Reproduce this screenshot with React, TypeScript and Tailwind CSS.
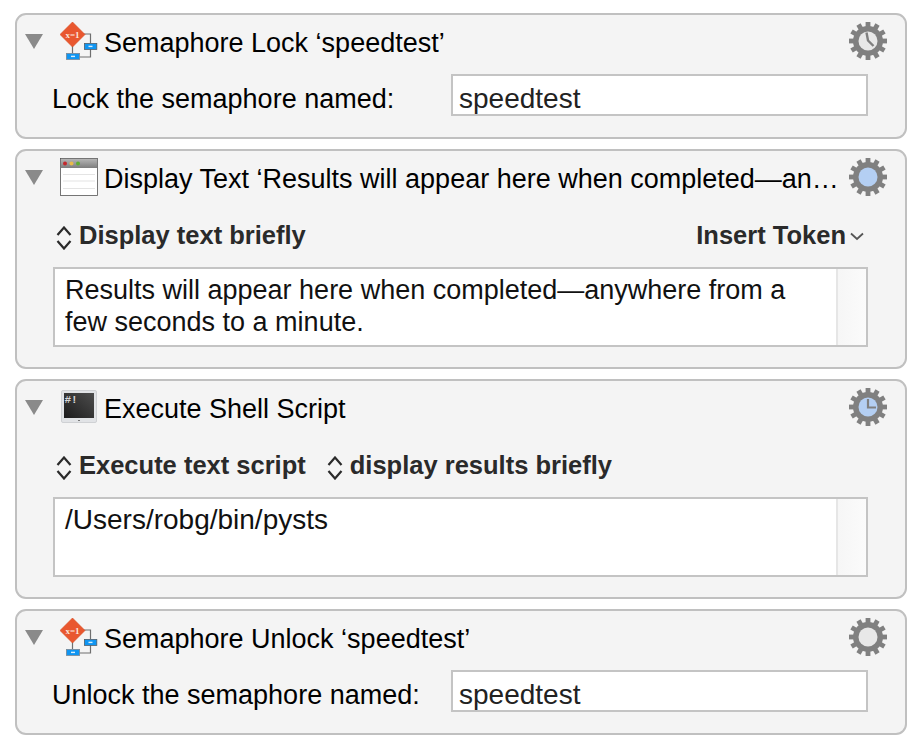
const font = "font-['Liberation_Sans',Arial,sans-serif]";

function Gear({ children }: { children?: React.ReactNode }) {
  const teeth = Array.from({ length: 12 }, (_, i) => i * 30);
  return (
    <svg width="38" height="38" viewBox="0 0 38 38">
      {teeth.map((a) => (
        <rect key={a} x="16.6" y="0" width="4.8" height="8" fill="#808080" transform={`rotate(${a} 19 19)`} />
      ))}
      <circle cx="19" cy="19" r="15" fill="#808080" />
      {children}
    </svg>
  );
}

function PlainGear() {
  return (
    <Gear>
      <circle cx="19" cy="19" r="9.5" fill="#e8e8e8" />
    </Gear>
  );
}

function ClockGear({ fill, variant }: { fill: string; variant: "slant" | "corner" }) {
  return (
    <Gear>
      <circle cx="19" cy="19" r="9.5" fill={fill} />
      {variant === "slant" ? (
        <path d="M17.5 10.5 L19 18.5 L24.5 24" stroke="#808080" strokeWidth="2.4" fill="none" />
      ) : (
        <path d="M19 11 L19 19.5 L27 19.5" stroke="#808080" strokeWidth="2.2" fill="none" />
      )}
    </Gear>
  );
}

function BlueGear() {
  return (
    <Gear>
      <circle cx="19" cy="19" r="9.5" fill="#b4cff3" />
    </Gear>
  );
}

function Triangle() {
  return (
    <svg width="18" height="15" viewBox="0 0 18 15" className="shrink-0 mt-[1px]">
      <path d="M0 0 H18 L9 15 Z" fill="#8a8a8a" />
    </svg>
  );
}

function SemaphoreIcon() {
  return (
    <svg width="38" height="38" viewBox="0 0 38 38">
      <path d="M20 12 H30.5 V21 M30.5 27 V35 H20 M12.5 24 V31" stroke="#6f6f6f" strokeWidth="1.2" fill="none" />
      <path d="M12.5 0 L25 12.5 L12.5 25 L0 12.5 Z" fill="#e9572f" stroke="#d8491f" strokeWidth="0.6" />
      <text x="12.5" y="15.5" textAnchor="middle" fontSize="9" fontWeight="700" fill="#fbe6dc" fontFamily="Liberation Serif, serif">x=1</text>
      <rect x="24.4" y="21.4" width="12.4" height="6" fill="#0f95f2" stroke="#53606b" strokeWidth="0.8" />
      <rect x="28.5" y="23.7" width="4" height="1.4" fill="#d8eefc" />
      <rect x="6.4" y="31.4" width="13.2" height="6" fill="#0f95f2" stroke="#7a8894" strokeWidth="0.8" />
      <rect x="11" y="33.7" width="4" height="1.4" fill="#d8eefc" />
    </svg>
  );
}

function WindowIcon() {
  return (
    <svg width="38" height="38" viewBox="0 0 38 38">
      <defs>
        <linearGradient id="bar" x1="0" y1="0" x2="0" y2="1">
          <stop offset="0" stopColor="#b5b5b5" />
          <stop offset="1" stopColor="#7d7d7d" />
        </linearGradient>
      </defs>
      <rect x="0.5" y="0.5" width="37" height="37" fill="#fff" stroke="#555" strokeWidth="0.8" />
      <rect x="1" y="1" width="36" height="9" fill="url(#bar)" />
      <circle cx="5" cy="5.5" r="2" fill="#c4282d" />
      <circle cx="11.5" cy="5.5" r="2" fill="#e8bb4a" />
      <circle cx="18" cy="5.5" r="2" fill="#5fae2f" />
      <path d="M3 16.5 H35 M3 23 H35 M3 30.5 H35" stroke="#e4e4e4" strokeWidth="1.2" />
    </svg>
  );
}

function TerminalIcon() {
  return (
    <svg width="38" height="34" viewBox="0 0 38 34">
      <defs>
        <linearGradient id="screen" x1="0" y1="1" x2="1" y2="0">
          <stop offset="0" stopColor="#1c1c1c" />
          <stop offset="1" stopColor="#4d4d4d" />
        </linearGradient>
      </defs>
      <rect x="1.5" y="0.5" width="35" height="32" rx="1.5" fill="#e1e3e6" stroke="#cfd1d4" />
      <rect x="4" y="3" width="30" height="25" fill="url(#screen)" />
      <text x="4.5" y="13" fontSize="11" fontWeight="700" fill="#d5d5d5" fontFamily="Liberation Mono, monospace">#!</text>
      <rect x="18" y="30" width="2" height="1" fill="#777" />
    </svg>
  );
}

function UpDown() {
  return (
    <svg width="16" height="24" viewBox="0 0 16 24" className="shrink-0 mt-[5px]">
      <path d="M1.5 9 L8 1.5 L14.5 9 M1.5 15 L8 22.5 L14.5 15" stroke="#2a2a2a" strokeWidth="2.2" fill="none" />
    </svg>
  );
}

function Header({ icon, title, gear }: { icon: React.ReactNode; title: string; gear: React.ReactNode }) {
  return (
    <div className="flex items-center h-[38px]">
      <div className="w-[35px] flex justify-start">
        <Triangle />
      </div>
      <div className="w-[44px] flex justify-start">{icon}</div>
      <div className="flex-1 text-[27px] leading-none pt-[5px] whitespace-nowrap text-black">{title}</div>
      <div className="ml-auto">{gear}</div>
    </div>
  );
}

function Field({ value }: { value: string }) {
  return (
    <div className="flex-1 h-[42px] bg-white border-2 border-[#c4c4c4] pl-[6px] pt-[7px] flex items-center text-[28px] text-[#222]">
      {value}
    </div>
  );
}

function TextArea({ lines, size }: { lines: string[]; size: string }) {
  return (
    <div className="h-[80px] bg-white border-2 border-[#c4c4c4] flex">
      <div className={`flex-1 pl-[10px] pt-[5px] leading-[32px] text-[#111] ${size}`}>
        {lines.map((l) => (
          <div key={l}>{l}</div>
        ))}
      </div>
      <div className="w-[30px] border-l-2 border-[#e6e6e6] bg-gradient-to-r from-[#f6f6f6] to-[#fbfbfb]" />
    </div>
  );
}

function Select({ label }: { label: string }) {
  return (
    <div className="flex items-center gap-[7px]">
      <UpDown />
      <span className="text-[25.5px] font-bold text-[#2a2a2a] whitespace-nowrap">{label}</span>
    </div>
  );
}

export default function App() {
  const card = "border-2 border-[#c0c0c0] rounded-[11px] bg-[#f4f4f4] pl-[8px] pr-[18px]";
  return (
    <div className={`w-[924px] h-[750px] bg-white pl-[15px] pr-[17px] pt-[13px] flex flex-col gap-[10px] ${font}`}>
      <div className={`${card} h-[126px] pt-[7px]`}>
        <Header icon={<SemaphoreIcon />} title="Semaphore Lock ‘speedtest’" gear={<ClockGear fill="#e8e8e8" variant="slant" />} />
        <div className="flex items-start mt-[14px] pr-[19px]">
          <div className="w-[426px] pl-[27px] pt-[5px] text-[27px] text-black whitespace-nowrap">Lock the semaphore named:</div>
          <Field value="speedtest" />
        </div>
      </div>

      <div className={`${card} h-[220px] pt-[7px]`}>
        <Header icon={<WindowIcon />} title="Display Text ‘Results will appear here when completed—an…" gear={<BlueGear />} />
        <div className="flex items-center justify-between h-[26px] mt-[26px] pl-[31px] pr-[23px]">
          <Select label="Display text briefly" />
          <div className="flex items-center gap-[4px] text-[25.5px] font-bold text-[#2a2a2a]">
            Insert Token
            <svg width="14" height="9" viewBox="0 0 14 9" className="mt-[3px]">
              <path d="M1 1.5 L7 7 L13 1.5" stroke="#555" strokeWidth="1.8" fill="none" />
            </svg>
          </div>
        </div>
        <div className="mt-[19px] ml-[28px] mr-[19px]">
          <TextArea size="text-[27px]" lines={["Results will appear here when completed—anywhere from a", "few seconds to a minute."]} />
        </div>
      </div>

      <div className={`${card} h-[220px] pt-[7px]`}>
        <Header icon={<TerminalIcon />} title="Execute Shell Script" gear={<ClockGear fill="#b4cff3" variant="corner" />} />
        <div className="flex items-center gap-[21px] h-[26px] mt-[26px] pl-[31px]">
          <Select label="Execute text script" />
          <Select label="display results briefly" />
        </div>
        <div className="mt-[19px] ml-[28px] mr-[19px]">
          <TextArea size="text-[28px]" lines={["/Users/robg/bin/pysts"]} />
        </div>
      </div>

      <div className={`${card} h-[126px] pt-[7px]`}>
        <Header icon={<SemaphoreIcon />} title="Semaphore Unlock ‘speedtest’" gear={<PlainGear />} />
        <div className="flex items-start mt-[14px] pr-[19px]">
          <div className="w-[426px] pl-[27px] pt-[5px] text-[27px] text-black whitespace-nowrap">Unlock the semaphore named:</div>
          <Field value="speedtest" />
        </div>
      </div>
    </div>
  );
}
